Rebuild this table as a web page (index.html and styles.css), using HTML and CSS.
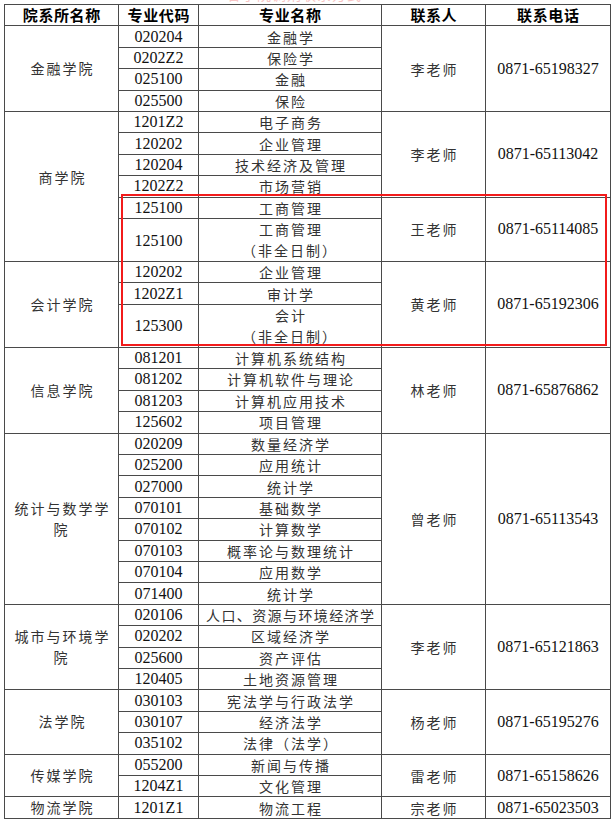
FILE: index.html
```html
<!DOCTYPE html>
<html lang="zh-CN">
<head>
<meta charset="utf-8">
<title>联系方式</title>
<link rel="stylesheet" href="styles.css">
</head>
<body>
<div class="caption"><span>各学院调剂联系方式</span></div>
<div class="sheet">
<table class="grid">
<colgroup>
<col class="c1"><col class="c2"><col class="c3"><col class="c4"><col class="c5">
</colgroup>
<thead>
<tr class="head"><th>院系所名称</th><th>专业代码</th><th>专业名称</th><th>联系人</th><th>联系电话</th></tr>
</thead>
<tbody>
<tr><td class="dept" rowspan="4">金融学院</td><td class="num">020204</td><td class="cn">金融学</td><td class="cn" rowspan="4">李老师</td><td class="num" rowspan="4">0871-65198327</td></tr>
<tr><td class="num">0202Z2</td><td class="cn">保险学</td></tr>
<tr><td class="num">025100</td><td class="cn">金融</td></tr>
<tr><td class="num">025500</td><td class="cn">保险</td></tr>

<tr><td class="dept up" rowspan="6">商学院</td><td class="num">1201Z2</td><td class="cn">电子商务</td><td class="cn" rowspan="4">李老师</td><td class="num" rowspan="4">0871-65113042</td></tr>
<tr><td class="num">120202</td><td class="cn">企业管理</td></tr>
<tr><td class="num">120204</td><td class="cn">技术经济及管理</td></tr>
<tr><td class="num">1202Z2</td><td class="cn">市场营销</td></tr>
<tr><td class="num">125100</td><td class="cn">工商管理</td><td class="cn" rowspan="2">王老师</td><td class="num" rowspan="2">0871-65114085</td></tr>
<tr class="double"><td class="num">125100</td><td class="cn">工商管理<br>（非全日制）</td></tr>

<tr><td class="dept" rowspan="3">会计学院</td><td class="num">120202</td><td class="cn">企业管理</td><td class="cn" rowspan="3">黄老师</td><td class="num" rowspan="3">0871-65192306</td></tr>
<tr><td class="num">1202Z1</td><td class="cn">审计学</td></tr>
<tr class="double"><td class="num">125300</td><td class="cn">会计<br>（非全日制）</td></tr>

<tr><td class="dept" rowspan="4">信息学院</td><td class="num">081201</td><td class="cn">计算机系统结构</td><td class="cn" rowspan="4">林老师</td><td class="num" rowspan="4">0871-65876862</td></tr>
<tr><td class="num">081202</td><td class="cn">计算机软件与理论</td></tr>
<tr><td class="num">081203</td><td class="cn">计算机应用技术</td></tr>
<tr><td class="num">125602</td><td class="cn">项目管理</td></tr>

<tr><td class="dept" rowspan="8">统计与数学学院</td><td class="num">020209</td><td class="cn">数量经济学</td><td class="cn" rowspan="8">曾老师</td><td class="num" rowspan="8">0871-65113543</td></tr>
<tr><td class="num">025200</td><td class="cn">应用统计</td></tr>
<tr><td class="num">027000</td><td class="cn">统计学</td></tr>
<tr><td class="num">070101</td><td class="cn">基础数学</td></tr>
<tr><td class="num">070102</td><td class="cn">计算数学</td></tr>
<tr><td class="num">070103</td><td class="cn">概率论与数理统计</td></tr>
<tr><td class="num">070104</td><td class="cn">应用数学</td></tr>
<tr><td class="num">071400</td><td class="cn">统计学</td></tr>

<tr><td class="dept" rowspan="4">城市与环境学院</td><td class="num">020106</td><td class="cn tight">人口、资源与环境经济学</td><td class="cn" rowspan="4">李老师</td><td class="num" rowspan="4">0871-65121863</td></tr>
<tr><td class="num">020202</td><td class="cn">区域经济学</td></tr>
<tr><td class="num">025600</td><td class="cn">资产评估</td></tr>
<tr><td class="num">120405</td><td class="cn">土地资源管理</td></tr>

<tr><td class="dept" rowspan="3">法学院</td><td class="num">030103</td><td class="cn">宪法学与行政法学</td><td class="cn" rowspan="3">杨老师</td><td class="num" rowspan="3">0871-65195276</td></tr>
<tr><td class="num">030107</td><td class="cn">经济法学</td></tr>
<tr><td class="num">035102</td><td class="cn">法律（法学）</td></tr>

<tr><td class="dept" rowspan="2">传媒学院</td><td class="num">055200</td><td class="cn">新闻与传播</td><td class="cn" rowspan="2">雷老师</td><td class="num" rowspan="2">0871-65158626</td></tr>
<tr><td class="num">1204Z1</td><td class="cn">文化管理</td></tr>

<tr><td class="dept">物流学院</td><td class="num">1201Z1</td><td class="cn">物流工程</td><td class="cn">宗老师</td><td class="num">0871-65023503</td></tr>
</tbody>
</table>
<div class="highlight"></div>
</div>
</body>
</html>
```

FILE: styles.css
```css
html, body {
  margin: 0;
  padding: 0;
  background: #ffffff;
}

body {
  width: 614px;
  height: 823px;
  overflow: hidden;
  font-family: "Liberation Serif", "Noto Sans CJK SC", serif;
}

.caption {
  height: 4px;
  overflow: hidden;
  padding-left: 227px;
}

.caption span {
  display: block;
  margin-top: -14px;
  font-family: "Noto Sans CJK SC", sans-serif;
  font-size: 14px;
  line-height: 16px;
  letter-spacing: 1px;
  color: #f8c4c4;
}

.sheet {
  position: relative;
  margin-left: 4px;
  width: 606px;
}

.grid {
  border-collapse: collapse;
  table-layout: fixed;
  width: 606px;
  border: 1px solid #333;
}

.c1 { width: 114px; }
.c2 { width: 80px; }
.c3 { width: 183px; }
.c4 { width: 104px; }
.c5 { width: 125px; }

.grid tr {
  height: 21.42px;
}

.grid tr.double {
  height: 42.84px;
}

.grid th,
.grid td {
  border: 1px solid #4a4a4a;
  padding: 0;
  text-align: center;
  vertical-align: middle;
  line-height: 18px;
}

.grid tr.double td {
  line-height: 21px;
}

.grid th {
  font-family: "Noto Sans CJK SC", sans-serif;
  font-weight: 700;
  font-size: 15px;
  letter-spacing: 0.6px;
  text-indent: 0.6px;
  color: #000;
}

.num {
  font-family: "Liberation Serif", serif;
  font-size: 16px;
  color: #111;
}

.cn,
.dept {
  font-family: "Noto Sans CJK SC", sans-serif;
  font-size: 14px;
  font-weight: 400;
  letter-spacing: 2px;
  text-indent: 2px;
  color: #333;
}

.grid .dept {
  padding: 0 6px;
  line-height: 21px;
}

.cn.tight {
  letter-spacing: 1.4px;
  text-indent: 1.4px;
}

.grid .dept.up {
  padding-bottom: 18px;
}

.highlight {
  position: absolute;
  left: 117px;
  top: 190px;
  width: 486px;
  height: 152px;
  box-sizing: border-box;
  border: 2.6px solid #f21b1b;
  pointer-events: none;
}
```
